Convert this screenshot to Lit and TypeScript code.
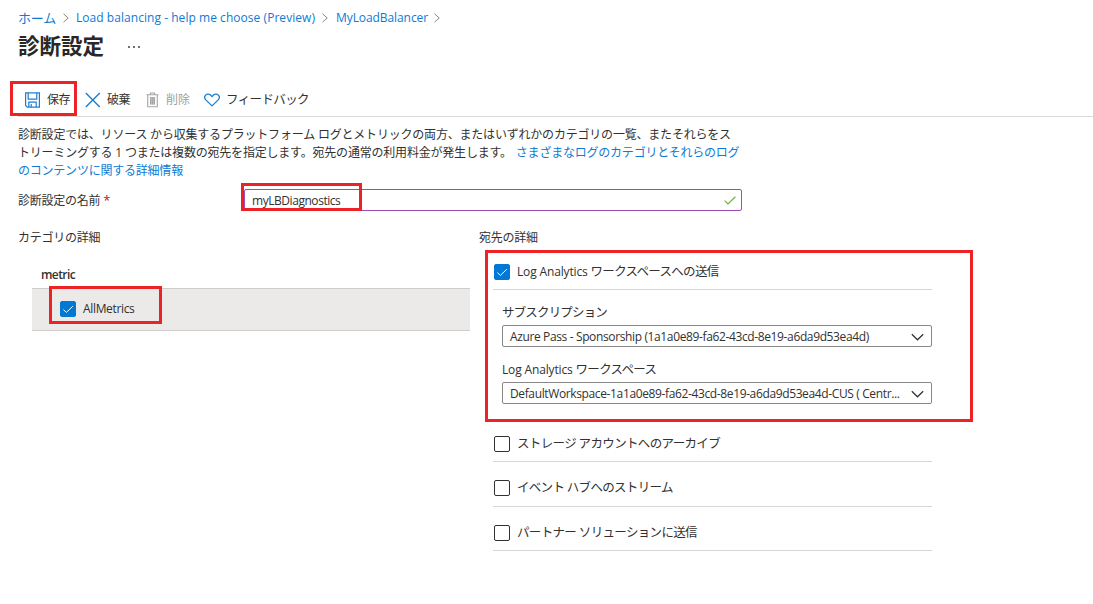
import { LitElement, html, css } from "lit";
import { customElement, property } from "lit/decorators.js";
import { classMap } from "lit/directives/class-map.js";

@customElement("check-box")
export class CheckBox extends LitElement {
  @property({ type: Boolean }) checked = false;
  static styles = css`
    :host { display: block; flex: none; width: 16px; height: 16px; }
    .box { box-sizing: border-box; width: 16px; height: 16px; border: 1px solid #323130; border-radius: 2px; background: #fff; }
    .on { background: #0078d4; border-color: #0078d4; }
    svg { display: block; width: 14px; height: 14px; }
  `;
  render() {
    return html`<div class=${classMap({ box: true, on: this.checked })}>
      ${this.checked
        ? html`<svg viewBox="0 0 14 14" fill="none" stroke="#fff" stroke-width="1"><path d="M2.4 7.6 5.4 10.4 11.8 4.2" /></svg>`
        : ""}
    </div>`;
  }
}

@customElement("app-root")
export class AppRoot extends LitElement {
  static styles = css`
    :host { display: block; width: 1093px; height: 604px; overflow: hidden; background: #fff; color: #323130;
      font-family: "Open Sans", "Noto Sans CJK JP", sans-serif; font-size: 12px; line-height: 18px; white-space: nowrap; }
    * { box-sizing: border-box; }
    svg { display: block; flex: none; }
    a { color: #0f7ad3; }
    .crumbs { display: flex; align-items: center; height: 34px; padding: 1px 0 0 18px; }
    .crumbs a { flex: none; }
    .home { width: 45px; font-size: 13px; letter-spacing: -0.2px; }
    .lb { width: 246px; margin-left: 7px; letter-spacing: 0.046px; }
    .my { width: 98px; margin-left: 8px; letter-spacing: -0.08px; }
    .crumbs svg { width: 6px; height: 10px; }
    .title { display: flex; align-items: center; height: 24px; padding-left: 18px; }
    h1 { margin: 0; width: 110px; font-size: 21.5px; line-height: 24px; font-weight: 700; color: #292827; }
    .dots { display: flex; gap: 3px; padding-top: 2px; }
    .dots i { width: 2px; height: 2px; background: #72706e; }
    .bar { position: relative; display: flex; align-items: center; height: 36px; margin: 23px 0 0 18px; padding: 2px 0 0 6px; border-bottom: 1px solid #dcdad8; }
    .bar span { letter-spacing: -0.4px; }
    .save { width: 38px; margin-left: 6px; }
    .drop { width: 39px; margin-left: 6px; }
    .bar .del { width: 38px; margin-left: 7px; color: #a19f9d; letter-spacing: -0.1px; }
    .bar .fb { margin-left: 6px; font-size: 12.5px; letter-spacing: -0.62px; }
    .mark { position: absolute; border: 3px solid #ec2227; pointer-events: none; }
    .mark-save { left: -8px; top: 0; width: 67px; height: 35px; }
    .intro { padding: 9px 0 0 18px; letter-spacing: -0.2px; }
    .intro a.more { margin-left: 1px; letter-spacing: -0.22px; }
    .name { display: flex; align-items: center; margin: 8px 0 0 18px; height: 24px; }
    .name label { width: 226px; letter-spacing: -0.25px; }
    .star { color: #a4262c; font-size: 13px; }
    .input { position: relative; display: flex; align-items: center; justify-content: space-between; width: 498px; height: 22px; padding: 1px 5px 0 7px; border: 1px solid #9b4fb5; border-radius: 2px; letter-spacing: -0.45px; }
    .mark-name { left: -4px; top: -7px; width: 121px; height: 28px; }
    .cols { display: grid; grid-template-columns: 461px 494px; margin: 17px 0 0 18px; }
    .head { letter-spacing: -0.25px; }
    .metric { margin: 19px 0 0 23px; font-weight: 600; letter-spacing: -0.6px; }
    .row { position: relative; display: flex; align-items: center; width: 438px; height: 43px; margin: 4px 0 0 14px; padding: 0 0 2px 28px; border: 1px solid #cfcdcb; border-width: 1px 0; background: #ebeae8; gap: 7px; letter-spacing: -0.34px; }
    .mark-row { left: 17px; top: -3px; width: 113px; height: 38px; }
    .dest { position: relative; height: 172px; margin: 3px 0 0 6px; padding: 12px 0 0 8px; }
    .mark-dest { inset: 0; width: 488px; }
    .opt { display: flex; align-items: center; gap: 7px; width: 439px; padding-left: 1px; border-bottom: 1px solid #d9d7d5; font-size: 12.5px; }
    .first { height: 28px; padding-bottom: 7px; }
    .opt .en, .lbl .en { font-size: 12px; letter-spacing: -0.15px; }
    .k1 { letter-spacing: -0.7px; }
    .lbl { margin: 14px 0 3px 9px; font-size: 12.5px; }
    .k2 { letter-spacing: -0.83px; }
    .select { display: flex; align-items: center; justify-content: space-between; width: 430px; height: 22px; margin-left: 9px; padding: 1px 7px 0 7px; border: 1px solid #8a8886; border-radius: 2px; letter-spacing: -0.37px; }
    .others { margin-left: 14px; }
    .others .opt { height: 44px; padding-top: 8px; }
    .others .opt:nth-child(1) { height: 40px; padding-top: 4px; }
    .others .opt:nth-child(2) { height: 45px; }
    .k3 { letter-spacing: -0.65px; }
    .k4 { letter-spacing: -0.69px; }
    .k5 { letter-spacing: -0.66px; }
  `;

  private sep() {
    return html`<svg viewBox="0 0 6 10" fill="none" stroke="#8a8886" stroke-width="1"><path d="M.5 .8 5.2 5 .5 9.2" /></svg>`;
  }

  private chevron() {
    return html`<svg width="13" height="8" viewBox="0 0 13 8" fill="none" stroke="#323130" stroke-width="1.2"><path d="M.8 1.2 6.5 6.8 12.2 1.2" /></svg>`;
  }

  render() {
    return html`
      <nav class="crumbs">
        <a class="home">ホーム</a>${this.sep()}
        <a class="lb">Load balancing - help me choose (Preview)</a>${this.sep()}
        <a class="my">MyLoadBalancer</a>${this.sep()}
      </nav>
      <div class="title">
        <h1>診断設定</h1>
        <div class="dots"><i></i><i></i><i></i></div>
      </div>
      <div class="bar">
        <svg width="17" height="16" viewBox="0 0 17 16" fill="none" stroke="#1c7fd0" stroke-width="1.2">
          <path d="M1.6 .9H15.4V15.1H3.4L1.6 13.4Z M4.2 1V7.2H12.8V1 M4.8 15V10.2H12.2V15 M7.2 12V15" />
        </svg>
        <span class="save">保存</span>
        <svg width="16" height="16" viewBox="0 0 16 16" fill="none" stroke="#1c7fd0" stroke-width="1.4"><path d="M.8 1 14.8 15M14.8 1 .8 15" /></svg>
        <span class="drop">破棄</span>
        <svg width="13" height="16" viewBox="0 0 13 16" fill="none" stroke="#a8a6a4" stroke-width="1.1">
          <path d="M.5 2.8H12.5M4.4 2.8V1H8.6V2.8M1.7 3V14.8H11.3V3" /><path fill="#c0bebc" stroke="none" d="M4 5H9V12.5H4Z" /><path d="M4.5 5V12.5M6.5 5V12.5M8.5 5V12.5" />
        </svg>
        <span class="del">削除</span>
        <svg width="16" height="14" viewBox="0 0 16 14" fill="none" stroke="#1c7fd0" stroke-width="1.3">
          <path d="M8 12.9 1.8 6.9C.4 5.4 .4 3.4 1.6 2.1 2.9.7 5.2.7 6.5 2L8 3.6 9.5 2C10.8.7 13.1.7 14.4 2.1 15.6 3.4 15.6 5.4 14.2 6.9Z" />
        </svg>
        <span class="fb">フィードバック</span>
        <div class="mark mark-save"></div>
      </div>
      <div class="intro">
        診断設定では、リソース から収集するプラットフォーム ログとメトリックの両方、またはいずれかのカテゴリの一覧、またそれらをス<br />トリーミングする 1 つまたは複数の宛先を指定します。宛先の通常の利用料金が発生します。
        <a class="more">さまざまなログのカテゴリとそれらのログ<br />のコンテンツに関する詳細情報</a>
      </div>
      <div class="name">
        <label>診断設定の名前 <span class="star">*</span></label>
        <div class="input">
          <span>myLBDiagnostics</span>
          <svg width="12" height="9" viewBox="0 0 12 9" fill="none" stroke="#6bb536" stroke-width="1.2"><path d="M.6 4.6 4 8 11.4 .7" /></svg>
          <div class="mark mark-name"></div>
        </div>
      </div>
      <div class="cols">
        <section>
          <div class="head">カテゴリの詳細</div>
          <div class="metric">metric</div>
          <div class="row">
            <check-box checked></check-box><span>AllMetrics</span>
            <div class="mark mark-row"></div>
          </div>
        </section>
        <section>
          <div class="head">宛先の詳細</div>
          <div class="dest">
            <div class="opt first"><check-box checked></check-box><span><span class="en">Log Analytics </span><span class="k1">ワークスペースへの送信</span></span></div>
            <div class="lbl k2">サブスクリプション</div>
            <div class="select"><span>Azure Pass - Sponsorship (1a1a0e89-fa62-43cd-8e19-a6da9d53ea4d)</span>${this.chevron()}</div>
            <div class="lbl"><span class="en">Log Analytics </span><span class="k1">ワークスペース</span></div>
            <div class="select"><span>DefaultWorkspace-1a1a0e89-fa62-43cd-8e19-a6da9d53ea4d-CUS ( Centr...</span>${this.chevron()}</div>
            <div class="mark mark-dest"></div>
          </div>
          <div class="others">
            <div class="opt"><check-box></check-box><span class="k3">ストレージ アカウントへのアーカイブ</span></div>
            <div class="opt"><check-box></check-box><span class="k4">イベント ハブへのストリーム</span></div>
            <div class="opt"><check-box></check-box><span class="k5">パートナー ソリューションに送信</span></div>
          </div>
        </section>
      </div>
    `;
  }
}
